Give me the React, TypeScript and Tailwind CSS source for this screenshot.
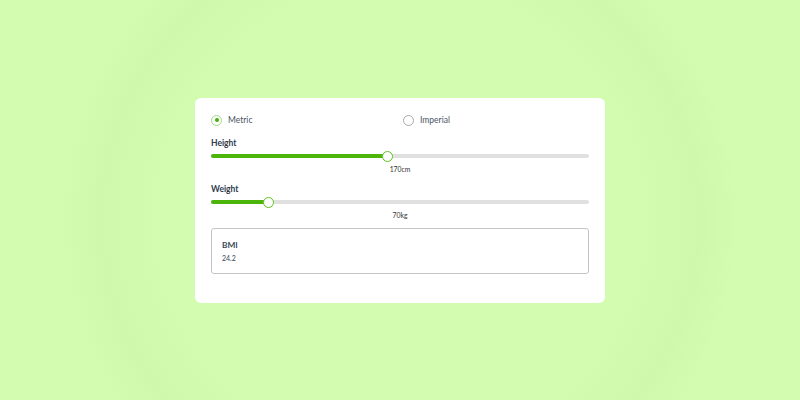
import React, { useState } from 'react';

type SliderProps = {
  label: string;
  value: number;
  min: number;
  max: number;
  unit: string;
  className?: string;
};

const Slider: React.FC<SliderProps> = ({ label, value, min, max, unit, className = '' }) => {
  const pct = ((value - min) / (max - min)) * 100;
  return (
    <div className={`flex flex-col ${className}`}>
      <span className="text-[8.5px] leading-[10px] font-bold text-[#2f3a4c]">{label}</span>
      <div className="relative h-[11px] mt-[3px] flex items-center">
        <div className="w-full h-[4px] rounded-full bg-[#e0e0e0]" />
        <div className="absolute left-0 h-[4px] rounded-full bg-[#4cb50a]" style={{ width: `${pct}%` }} />
        <div
          className="absolute w-[11px] h-[11px] -ml-[5px] rounded-full bg-white border-[1.5px] border-[#5ec21f]"
          style={{ left: `${pct}%` }}
        />
      </div>
      <span className="text-[6.8px] leading-[10px] text-[#333] text-center mt-[2px]">
        {value}
        {unit}
      </span>
    </div>
  );
};

const Radio: React.FC<{ label: string; checked: boolean; onClick: () => void }> = ({ label, checked, onClick }) => (
  <button className="flex items-center h-[17px] text-left" onClick={onClick}>
    <span
      className={`w-[11px] h-[11px] rounded-full border flex items-center justify-center ${checked ? 'border-[#a3d886]' : 'border-[#a9a9a9]'}`}
    >
      {checked && <span className="w-[4px] h-[4px] rounded-full bg-[#45b007]" />}
    </span>
    <span className="text-[8.5px] text-[#4a5366] ml-[6px]">{label}</span>
  </button>
);

export default function App() {
  const [metric, setMetric] = useState(true);

  return (
    <div
      className="w-[800px] h-[400px] flex items-center justify-center bg-[#d3fcb1] bg-[radial-gradient(ellipse_340px_330px_at_50%_55%,#d3fcb1_0px,#d3fcb1_70%,#cff8ad_88%,#d3fcb1_100%)]"
      style={{ fontFamily: 'Lato, "Open Sans", sans-serif' }}
    >
      <div className="w-[410px] h-[205px] bg-white rounded-[6px] px-4 pt-[14px] flex flex-col">
        <div className="grid grid-cols-2 gap-[6px]">
          <Radio label="Metric" checked={metric} onClick={() => setMetric(true)} />
          <Radio label="Imperial" checked={!metric} onClick={() => setMetric(false)} />
        </div>

        <Slider className="mt-[9px]" label="Height" value={170} min={100} max={250} unit="cm" />
        <Slider className="mt-[10px]" label="Weight" value={70} min={40} max={240} unit="kg" />

        <div className="mt-[8px] h-[46px] border border-[#c4c4c4] rounded-[3px] px-[10px] pt-[11px] flex flex-col">
          <span className="text-[8.3px] leading-[10px] font-bold text-[#3a4356]">BMI</span>
          <span className="text-[7px] leading-[10px] text-[#3a4356] mt-[3px]">24.2</span>
        </div>
      </div>
    </div>
  );
}
